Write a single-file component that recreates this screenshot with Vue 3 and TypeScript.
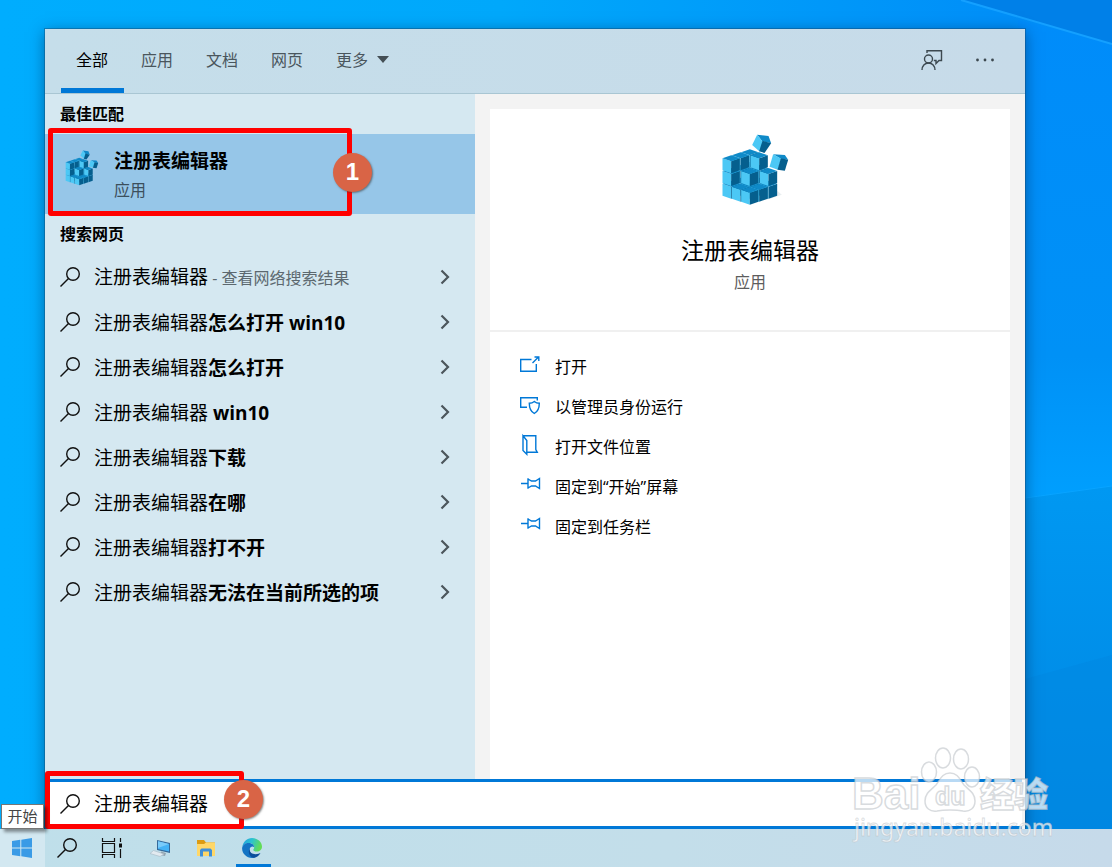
<script setup lang="ts">
import { ref } from 'vue'

interface Cube {
  left: string
  right: string
  top: string
}

interface Suggestion {
  head: string
  bold?: string
  note?: string
}

interface Action {
  label: string
  icon: 'open' | 'admin' | 'folder' | 'pin'
}

const query = ref('注册表编辑器')
const tabs = ['全部', '应用', '文档', '网页']
const activeTab = ref('全部')

const suggestions: Suggestion[] = [
  { head: '注册表编辑器', note: ' - 查看网络搜索结果' },
  { head: '注册表编辑器', bold: '怎么打开 win10' },
  { head: '注册表编辑器', bold: '怎么打开' },
  { head: '注册表编辑器', bold: ' win10' },
  { head: '注册表编辑器', bold: '下载' },
  { head: '注册表编辑器', bold: '在哪' },
  { head: '注册表编辑器', bold: '打不开' },
  { head: '注册表编辑器', bold: '无法在当前所选的项' },
]

const actions: Action[] = [
  { label: '打开', icon: 'open' },
  { label: '以管理员身份运行', icon: 'admin' },
  { label: '打开文件位置', icon: 'folder' },
  { label: '固定到“开始”屏幕', icon: 'pin' },
  { label: '固定到任务栏', icon: 'pin' },
]

// Cells are [left depth, right depth, level], listed back to front.
const cells: [number, number, number][] = [
  [2, 2, 0], [2, 1, 0], [1, 2, 0], [1, 1, 0], [2, 0, 0], [0, 2, 0], [1, 0, 0], [0, 1, 0], [0, 0, 0],
  [2, 2, 1], [2, 1, 1], [1, 2, 1], [2, 0, 1], [0, 2, 1], [1, 1, 1],
  [2, 2, 2], [2, 1, 2], [1, 2, 2], [2, 0, 2],
]

function makeCube([i, j, k]: [number, number, number]): Cube {
  const x = 150 + (j - i) * 28
  const y = 218 - (i + j) * 9 - k * 38
  const w = 26
  const h = 9
  const d = 36
  return {
    left: `${x - w},${y - h} ${x},${y} ${x},${y + d} ${x - w},${y + d - h}`,
    right: `${x},${y} ${x + w},${y - h} ${x + w},${y + d - h} ${x},${y + d}`,
    top: `${x - w},${y - h} ${x},${y} ${x + w},${y - h} ${x},${y - 2 * h}`,
  }
}

const cubes = cells.map(makeCube)
</script>

<template>
  <div class="desktop">
    <svg class="wallpaper" viewBox="0 0 1112 867" preserveAspectRatio="none" aria-hidden="true">
      <defs>
        <linearGradient id="wall" x1="0" y1="0" x2="1" y2="0">
          <stop offset="0" stop-color="#00adfe" />
          <stop offset="0.45" stop-color="#00a8fb" />
          <stop offset="0.9" stop-color="#008ff8" />
          <stop offset="1" stop-color="#008cfa" />
        </linearGradient>
        <linearGradient id="glow" x1="0" y1="0" x2="0" y2="1">
          <stop offset="0" stop-color="#008cfa" />
          <stop offset="0.7" stop-color="#0091f6" />
          <stop offset="1" stop-color="#009ffe" />
        </linearGradient>
        <linearGradient id="low" x1="0" y1="0" x2="0" y2="1">
          <stop offset="0" stop-color="#0098f2" />
          <stop offset="1" stop-color="#0085e0" />
        </linearGradient>
      </defs>
      <rect width="1112" height="867" fill="url(#wall)" />
      <path d="M1018 20 1112 44V486L1018 499z" fill="url(#glow)" />
      <path d="M961 0H1112V44z" fill="#0080e8" />
      <path d="M961 0 1112 44" stroke="#14a0ff" stroke-width="2" />
      <path d="M1018 499 1112 486V867H1018z" fill="url(#low)" />
      <path d="M1018 499 1112 486" stroke="#08a4ff" stroke-width="1" />
      <path d="M1018 681 1112 655V867H1018z" fill="#0087e2" fill-opacity="0.5" />
    </svg>

    <main class="window">
      <header class="header">
        <nav class="tabs">
          <button
            v-for="tab in tabs"
            :key="tab"
            type="button"
            class="tab"
            :class="{ active: tab === activeTab }"
            @click="activeTab = tab"
          >
            {{ tab }}
          </button>
          <button type="button" class="tab more">
            更多
            <svg width="12" height="7" viewBox="0 0 12 7" aria-hidden="true"><path d="M0 0H12L6 7z" fill="#444f55" /></svg>
          </button>
        </nav>
        <div class="tools">
          <button type="button" class="tool" aria-label="反馈">
            <svg width="22" height="22" viewBox="0 0 22 22" fill="none" stroke="#3c484f" stroke-width="1.4" aria-hidden="true">
              <circle cx="7.5" cy="10" r="4" />
              <path d="M1 21c0-4 2.700-7 6.500-7s6.500 3 6.500 7M6 4V1.700H20.500V11.500H18L15 14.500V11.500H12.800" />
            </svg>
          </button>
          <button type="button" class="tool" aria-label="更多选项">
            <svg width="20" height="4" viewBox="0 0 20 4" fill="#3c484f" aria-hidden="true">
              <circle cx="2.500" cy="2" r="1.400" /><circle cx="10" cy="2" r="1.400" /><circle cx="17.500" cy="2" r="1.400" />
            </svg>
          </button>
        </div>
      </header>

      <div class="body">
        <section class="results">
          <h2 class="label">最佳匹配</h2>
          <div class="best">
            <button type="button" class="best-button">
              <svg class="best-icon" viewBox="64 42 206 216" aria-hidden="true">
                <g v-for="(c, n) in cubes" :key="n">
                  <polygon :points="c.left" fill="#4cc8f5" />
                  <polygon :points="c.right" fill="#055f8e" />
                  <polygon :points="c.top" fill="#0f8ac8" />
                </g>
                <path d="M172 44 206 48 214 70 187 64z" fill="#0f8ac8" />
                <path d="M172 44 189 66 180 95 157 75z" fill="#4cc8f5" />
                <path d="M188 62 214 70 194 99 178 94z" fill="#055f8e" />
                <path d="M220 103 255 105 265 119 243 116z" fill="#0f8ac8" />
                <path d="M220 103 244 116 234 149 209 140z" fill="#4cc8f5" />
                <path d="M243 115 265 119 255 152 233 149z" fill="#055f8e" />
              </svg>
              <span class="best-text">
                <strong>注册表编辑器</strong>
                <small>应用</small>
              </span>
            </button>
            <div class="mark mark-one"></div>
            <span class="badge badge-one">1</span>
          </div>
          <h2 class="label">搜索网页</h2>
          <ul class="list">
            <li v-for="(s, n) in suggestions" :key="n">
              <button type="button" class="row">
                <svg class="glass" viewBox="0 0 20 20" aria-hidden="true"><circle cx="13" cy="7" r="6.300" /><path d="M8.500 11.500.5 19.500" /></svg>
                <span class="row-text">{{ s.head }}<b v-if="s.bold">{{ s.bold }}</b><small v-if="s.note">{{ s.note }}</small></span>
                <svg class="chevron" viewBox="0 0 10 16" aria-hidden="true"><path d="M1.500 1.500 8 8 1.500 14.500" /></svg>
              </button>
            </li>
          </ul>
        </section>

        <section class="detail">
          <div class="card">
            <div class="hero">
              <svg class="hero-icon" viewBox="64 42 206 216" aria-hidden="true">
                <path d="M200 240 246 224 232 212z" fill="#e9eef0" />
                <g v-for="(c, n) in cubes" :key="n">
                  <polygon :points="c.left" fill="#4cc8f5" />
                  <polygon :points="c.right" fill="#055f8e" />
                  <polygon :points="c.top" fill="#0f8ac8" />
                </g>
                <path d="M172 44 206 48 214 70 187 64z" fill="#0f8ac8" />
                <path d="M172 44 189 66 180 95 157 75z" fill="#4cc8f5" />
                <path d="M188 62 214 70 194 99 178 94z" fill="#055f8e" />
                <path d="M220 103 255 105 265 119 243 116z" fill="#0f8ac8" />
                <path d="M220 103 244 116 234 149 209 140z" fill="#4cc8f5" />
                <path d="M243 115 265 119 255 152 233 149z" fill="#055f8e" />
              </svg>
              <h1>注册表编辑器</h1>
              <p>应用</p>
            </div>
            <ul class="actions">
              <li v-for="a in actions" :key="a.label">
                <button type="button" class="action">
                  <svg class="action-icon" viewBox="0 0 20 20" aria-hidden="true">
                    <path v-if="a.icon === 'open'" d="M11.500 4.500H.700V16.300H16.300V9M12.500 8 18.500 2M14.500 2H18.800V6" />
                    <template v-else-if="a.icon === 'admin'">
                      <path d="M7 12.300H.700V2.700H17.300V5.500" />
                      <path d="M14.300 6.500c1.500 1.200 3.200 1.700 5 1.700 0 5-.8 8-5 10.300-4.200-2.300-5-5.300-5-10.300 1.800 0 3.500-.5 5-1.700z" />
                    </template>
                    <path v-else-if="a.icon === 'folder'" d="M3 .700H15.800V14.500L17.300 17.300H7.200M3 .700 6.800 5.500V19.300L3 15.500z" />
                    <path v-else d="M1 8.500H8M8 3.200V13.800M8 4 11.500 6H15.500L19.500 3.500V13.500L15.500 11H11.500L8 13" />
                  </svg>
                  {{ a.label }}
                </button>
              </li>
            </ul>
          </div>
        </section>
      </div>

      <div class="search">
        <label class="search-box">
          <svg class="glass" viewBox="0 0 20 20" aria-hidden="true"><circle cx="13" cy="7" r="6.300" /><path d="M8.500 11.500.5 19.500" /></svg>
          <input v-model="query" type="text" aria-label="搜索" />
        </label>
        <div class="mark mark-two"></div>
        <span class="badge badge-two">2</span>
      </div>
    </main>

    <footer class="taskbar">
      <button type="button" class="task start" aria-label="开始">
        <svg width="20" height="20" viewBox="0 0 20 20" fill="#3a9be6" aria-hidden="true">
          <path d="M0 3 8.300 1.800V9.500H0zM9.300 1.700 20 0V9.500H9.300zM0 10.500H8.300V18.200L0 17zM9.300 10.500H20V20L9.300 18.300z" />
        </svg>
      </button>
      <button type="button" class="task" aria-label="搜索">
        <svg class="glass" viewBox="0 0 20 20" aria-hidden="true"><circle cx="13" cy="7" r="6.300" /><path d="M8.500 11.500.5 19.500" /></svg>
      </button>
      <button type="button" class="task" aria-label="任务视图">
        <svg width="22" height="20" viewBox="0 0 22 20" fill="none" stroke="#111" stroke-width="1.200" aria-hidden="true">
          <path d="M1.500 0V3.500H13.500V0M1.500 20V16.500H13.500V20M1.500 5.500H13.500V14.500H1.500zM19.500 0V4M19.500 11V20" />
          <path d="M18 5.500H21V9.500H18z" fill="#111" stroke="none" />
        </svg>
      </button>
      <button type="button" class="task" aria-label="远程桌面">
        <svg width="22" height="20" viewBox="0 0 22 20" aria-hidden="true">
          <path d="M7 2 20 5V15L7 12z" fill="#35699a" />
          <path d="M8 3.300 19 6V13.500L8 11z" fill="#45b2f5" />
          <path d="M8 3.300 19 6 8 10z" fill="#7acbfa" />
          <path d="M11 13.500 16 15 15 18 10 17z" fill="#94a4b0" />
          <path d="M3.500 12.500 14 16 10 18.500 0 15.500z" fill="#e2eaf0" stroke="#a6b8c4" stroke-width=".6" />
        </svg>
      </button>
      <button type="button" class="task" aria-label="文件资源管理器">
        <svg width="20" height="18" viewBox="0 0 20 18" aria-hidden="true">
          <path d="M1 1H8L10 3.500H19V17H1z" fill="#dc9b12" />
          <path d="M1 5H8L10 3.500H19V17H1z" fill="#ffd768" />
          <path d="M4 17.500V11L5.500 9.500H14.500L16 11V17.500H13V12.500H7V17.500z" fill="#3f8fd8" />
        </svg>
      </button>
      <button type="button" class="task running" aria-label="Microsoft Edge">
        <svg width="20" height="20" viewBox="0 0 20 20" aria-hidden="true">
          <defs>
            <linearGradient id="edgeTop" x1="0" y1="0" x2="1" y2="0.300">
              <stop offset="0" stop-color="#1f9de0" /><stop offset="0.5" stop-color="#2cc3d0" /><stop offset="1" stop-color="#62dc56" />
            </linearGradient>
          </defs>
          <path d="M.3 9C1.200 3.500 5 0 10 0c6 0 10 4.300 10 8.500 0 3.300-2.500 5-5.200 5-2.600 0-3.600-1-3.600-1.700 0-.6 1-1 1-2.600C12.200 6.500 9.500 5 6.600 5 3.500 5 1.200 6.800.3 9z" fill="url(#edgeTop)" />
          <path d="M.1 10.500C.3 7 3.200 5 6.600 5c2.900 0 5.600 1.600 5.600 4.200C11 7.800 8.500 8.300 7.800 10.500 6.800 14 9.500 19 13 19.500 6 21.300.2 16.500.1 10.500z" fill="#1374c4" />
          <path d="M7.800 10.300C7 14 9.700 16.200 13.500 16.200c2.300 0 4.200-.9 5-1.200-1.400 2.600-3.700 4.400-6.500 4.900-4.200-.8-6.700-5.500-4.200-9.600z" fill="#0b4f9c" />
        </svg>
      </button>
      <span class="tooltip" role="tooltip">开始</span>
    </footer>

    <svg class="watermark" width="210" height="106" viewBox="0 0 210 106" aria-hidden="true">
      <g class="ink">
        <ellipse cx="79" cy="32" rx="7.500" ry="10" />
        <ellipse cx="93" cy="18" rx="7.500" ry="10" />
        <ellipse cx="111" cy="19" rx="7.500" ry="10" />
        <ellipse cx="122" cy="37" rx="7.500" ry="10" />
        <path d="M100 33c-8 0-10 7-14 12-5 5-11 8-11 16 0 7 5 11 12 10 5-1 8-1 13-1s8 0 13 1c7 1 12-3 12-10 0-8-6-11-11-16-4-5-6-12-14-12z" />
        <text x="2" y="69" class="latin">Bai</text>
        <text x="85" y="65" class="du">du</text>
        <text x="130" y="67" class="cjk">经验</text>
        <text x="4" y="96" class="url">jingyan.baidu.com</text>
      </g>
    </svg>
  </div>
</template>

<style>
body {
  margin: 0;
}
</style>

<style scoped>
.desktop {
  position: relative;
  display: flex;
  flex-direction: column;
  min-height: 100vh;
  overflow: hidden;
  background: #00a8fb;
  color: #000;
  font-family: "Open Sans", "Noto Sans CJK SC", sans-serif;
  font-size: 16px;
  line-height: 24px;
}
.desktop * {
  box-sizing: border-box;
}
button {
  padding: 0;
  border: 0;
  background: none;
  color: inherit;
  font: inherit;
  text-align: left;
}
ul {
  margin: 0;
  padding: 0;
  list-style: none;
}
h1,
h2,
p {
  margin: 0;
}
.wallpaper {
  position: absolute;
  inset: 0;
  width: 100%;
  height: 100%;
}
.window {
  position: relative;
  display: flex;
  flex: 1;
  flex-direction: column;
  margin: 29px 87px 0 45px;
  box-shadow: 0 0 0 1px rgba(20, 70, 110, 0.4), 0 3px 14px rgba(0, 30, 70, 0.5);
}
.header {
  display: flex;
  justify-content: space-between;
  height: 65px;
  padding: 0 30px 0 16px;
  border-bottom: 1px solid #a9c6d3;
  background: linear-gradient(90deg, #c5deea, #c7dbe9);
}
.tabs {
  display: flex;
  gap: 2px;
}
.tab {
  padding: 2px 16px 0 15px;
  border-bottom: 5px solid transparent;
  color: #4a565d;
}
.tab.active {
  border-color: #0078d7;
  color: #000;
}
.more {
  display: flex;
  align-items: center;
  gap: 9px;
}
.tools {
  display: flex;
  align-items: center;
  gap: 32px;
  padding-bottom: 2px;
}
.tool {
  display: flex;
}
.body {
  display: flex;
  flex: 1;
}
.results {
  flex: 0 0 430px;
  background: #d5e8f1;
}
.label {
  padding: 8px 15px;
  font-size: 16px;
  font-weight: 700;
  line-height: 24px;
}
.best {
  position: relative;
  background: #96c6e8;
}
.best-button {
  display: flex;
  align-items: center;
  gap: 15px;
  width: 100%;
  height: 80px;
  padding: 0 20px;
}
.best-icon {
  width: 34px;
  height: 36px;
  margin-bottom: 12px;
}
.best-text {
  display: flex;
  flex-direction: column;
  gap: 3px;
}
.best-text strong {
  font-size: 19px;
  line-height: 28px;
}
.best-text small {
  color: #3c4f5c;
  font-size: 16px;
  line-height: 24px;
}
.row {
  display: flex;
  align-items: center;
  width: 100%;
  height: 45px;
  padding: 0 25px 0 15px;
}
.glass {
  flex: none;
  width: 20px;
  height: 20px;
  fill: none;
  stroke: #111;
  stroke-width: 1.4;
}
.row-text {
  flex: 1;
  margin-left: 14px;
  padding-top: 2px;
  font-size: 19px;
  line-height: 28px;
  white-space: pre;
}
.row-text small {
  color: #5c686f;
  font-size: 16px;
}
.chevron {
  width: 10px;
  height: 16px;
  fill: none;
  stroke: #4c565c;
  stroke-width: 2.2;
}
.detail {
  display: flex;
  flex: 1;
  padding: 15px 15px 0;
  background: #f3f3f3;
}
.card {
  flex: 1;
  background: #fff;
}
.hero {
  display: flex;
  flex-direction: column;
  align-items: center;
  height: 223px;
  padding-top: 25px;
  border-bottom: 2px solid #f0f0f0;
}
.hero-icon {
  width: 69px;
  height: 72px;
  margin-left: 10px;
}
.hero h1 {
  margin-top: 28px;
  font-size: 23px;
  font-weight: 400;
  line-height: 32px;
}
.hero p {
  margin-top: 4px;
  color: #5d5d5d;
}
.actions {
  padding: 15px 30px;
}
.action {
  display: flex;
  align-items: center;
  gap: 15px;
  width: 100%;
  height: 40px;
}
.action-icon {
  flex: none;
  width: 20px;
  height: 20px;
  margin-bottom: 4px;
  overflow: visible;
  fill: none;
  stroke: #0078d7;
  stroke-width: 1.4;
}
.search {
  position: relative;
  padding-right: 3px;
  background: #f3f3f3;
}
.search-box {
  display: flex;
  align-items: center;
  gap: 14px;
  height: 50px;
  padding: 0 15px;
  border-top: 3px solid #0078d7;
  border-bottom: 3px solid #0078d7;
  background: #fff;
}
.search-box input {
  flex: 1;
  min-width: 0;
  padding: 0;
  border: 0;
  outline: 0;
  background: none;
  color: #000;
  font: inherit;
  font-size: 19px;
  line-height: 28px;
}
.mark {
  position: absolute;
  border: 5px solid #f00;
  border-radius: 3px;
  pointer-events: none;
}
.mark-one {
  top: -6px;
  left: 3px;
  width: 304px;
  height: 88px;
}
.mark-two {
  top: -8px;
  left: 0;
  width: 199px;
  height: 58px;
}
.badge {
  position: absolute;
  width: 39px;
  height: 39px;
  border-radius: 50%;
  background: #d96446;
  box-shadow: 1px 1px 2px rgba(60, 60, 60, 0.6);
  color: #fff;
  font: bold 24px/38px "Liberation Sans", sans-serif;
  text-align: center;
}
.badge-one {
  top: 19px;
  left: 288px;
}
.badge-two {
  top: 1px;
  left: 179px;
}
.taskbar {
  position: relative;
  display: flex;
  height: 38px;
  background: linear-gradient(90deg, #bfdfea, #c3deea 60%, #c6daea);
}
.task {
  display: flex;
  align-items: center;
  justify-content: center;
  width: 45px;
  padding-right: 1px;
}
.start {
  background: #d3e8f1;
}
.task:nth-child(n + 4) {
  padding-left: 8px;
}
.running {
  background: linear-gradient(#0078d7, #0078d7) 11px 100% / 35px 3px no-repeat;
}
.task.running {
  width: 46px;
}
.tooltip {
  position: absolute;
  bottom: 38px;
  left: 1px;
  width: 43px;
  height: 25px;
  border: 1px solid #767676;
  background: #fff;
  box-shadow: 3px 3px 3px rgba(0, 0, 0, 0.4);
  color: #444;
  font-size: 15px;
  line-height: 22px;
  text-align: center;
}
.watermark {
  position: absolute;
  right: 52px;
  bottom: 21px;
  pointer-events: none;
}
.ink {
  fill: rgba(255, 255, 255, 0.72);
  stroke: rgba(190, 195, 200, 0.6);
  stroke-width: 1.5;
}
.latin {
  font: bold 44px "Liberation Sans", sans-serif;
}
.du {
  font: bold 25px "Liberation Sans", sans-serif;
}
.cjk {
  font: 900 34px "Noto Sans CJK SC", sans-serif;
}
.url {
  font: 23px "Noto Sans", sans-serif;
  stroke-width: 0.8;
}
</style>
